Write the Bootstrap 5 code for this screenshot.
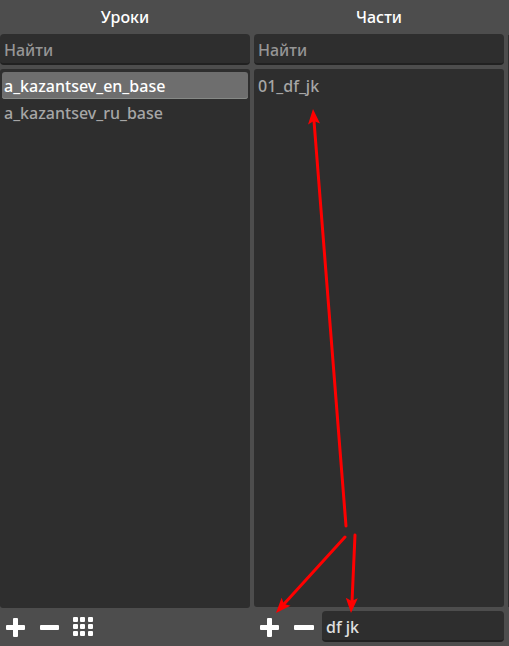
<!DOCTYPE html>
<html lang="ru">
<head>
<meta charset="utf-8">
<meta name="viewport" content="width=device-width, initial-scale=1">
<title>Уроки</title>
<link rel="stylesheet" href="https://cdn.jsdelivr.net/npm/bootstrap@5.3.0/dist/css/bootstrap.min.css">
<style>
body { background: #4d4d4d; color: #a6a6a6; font: 500 16px/24px "Noto Sans", "Open Sans", sans-serif; }
.pane { flex: 1 1 0; min-width: 0; }
.pane-title { font-size: 16px; line-height: 24px; font-weight: 500; color: #fff; padding: 5px 0; }
.field.form-control { height: 31px; padding: 3px 4px 0; font-size: 16px; line-height: 24px; font-weight: 500; border: 0; border-bottom: 2px solid #212121; border-radius: 4px; background: #2e2e2e; color: #e0e0e0; box-shadow: none; }
.field.form-control::placeholder { color: #969696; opacity: 1; }
.items { background: #2e2e2e; border-radius: 3px; padding: 3px 2px; }
.items .list-group-item { background: none; border: 0; border-radius: 3px; color: #a6a6a6; padding: 2px 2px 1px; line-height: 24px; font-weight: 500; }
.items .list-group-item.active { background: #6e6e6e; color: #fff; box-shadow: inset 0 -1px #868986; margin: 0; }
.tool.btn { width: 30px; height: 30px; padding: 0; border: 0; color: #fff; line-height: 0; flex: none; }
.tool svg { fill: currentColor; }
.bar-left { height: 38px; }
.bar-right { padding: 4px 0; height: 39px; }
.next-pane { flex: 0 0 1px; background: #2e2e2e; margin: 35px 0 39px; }
.arrows { pointer-events: none; }
</style>
</head>
<body>
<main class="position-relative vh-100 d-flex gap-1 overflow-hidden">
  <section class="pane d-flex flex-column">
    <h1 class="pane-title text-center m-0">Уроки</h1>
    <input class="field form-control" type="text" placeholder="Найти" aria-label="Найти урок">
    <div class="items list-group flex-fill mt-1">
      <button type="button" class="list-group-item list-group-item-action active">a_kazantsev_en_base</button>
      <button type="button" class="list-group-item list-group-item-action">a_kazantsev_ru_base</button>
    </div>
    <div class="bar-left d-flex align-items-center gap-1">
      <button type="button" class="tool btn" aria-label="Добавить урок"><svg width="30" height="30"><path d="M14 10h3q1 0 1 1v6h6q1 0 1 1v3q0 1-1 1h-6v6q0 1-1 1h-3q-1 0-1-1v-6H7q-1 0-1-1v-3q0-1 1-1h6v-6q0-1 1-1z" transform="translate(0 -4)"/></svg></button>
      <button type="button" class="tool btn" aria-label="Удалить урок"><svg width="30" height="30"><rect x="6" y="13" width="19" height="5" rx="1"/></svg></button>
      <button type="button" class="tool btn" aria-label="Показать сеткой"><svg width="30" height="30"><g id="dots"><rect x="5" y="5" width="5" height="5" rx="1"/><rect x="12" y="5" width="5" height="5" rx="1"/><rect x="20" y="5" width="5" height="5" rx="1"/></g><use href="#dots" y="7"/><use href="#dots" y="14"/></svg></button>
    </div>
  </section>
  <section class="pane d-flex flex-column">
    <h1 class="pane-title text-center m-0">Части</h1>
    <input class="field form-control" type="text" placeholder="Найти" aria-label="Найти часть">
    <div class="items list-group flex-fill mt-1">
      <button type="button" class="list-group-item list-group-item-action">01_df_jk</button>
    </div>
    <div class="bar-right d-flex align-items-center gap-1">
      <button type="button" class="tool btn" aria-label="Добавить часть"><svg width="30" height="30"><path d="M14 10h3q1 0 1 1v6h6q1 0 1 1v3q0 1-1 1h-6v6q0 1-1 1h-3q-1 0-1-1v-6H7q-1 0-1-1v-3q0-1 1-1h6v-6q0-1 1-1z" transform="translate(0 -4)"/></svg></button>
      <button type="button" class="tool btn" aria-label="Удалить часть"><svg width="30" height="30"><rect x="6" y="13" width="20" height="5" rx="1"/></svg></button>
      <input class="field form-control" type="text" value="df jk" aria-label="Название части">
    </div>
  </section>
  <div class="next-pane"></div>
  <svg class="arrows position-absolute top-0 start-0 w-100 h-100" viewBox="0 0 509 646" aria-hidden="true">
    <g stroke="#f00" stroke-width="3" stroke-linecap="round">
      <path d="M346 526L314 121M345 537L284 604M355 535L352 602"/>
    </g>
    <g fill="#f00">
      <path d="M0 0L6 15L0 12L-6 15Z" transform="translate(313 109) rotate(-4)"/>
      <path d="M0 0L6 15L0 12L-6 15Z" transform="translate(276 613) rotate(222)"/>
      <path d="M0 0L6 15L0 12L-6 15Z" transform="translate(351 613) rotate(183)"/>
    </g>
  </svg>
</main>
<script src="https://cdn.jsdelivr.net/npm/bootstrap@5.3.0/dist/js/bootstrap.bundle.min.js"></script>
</body>
</html>
